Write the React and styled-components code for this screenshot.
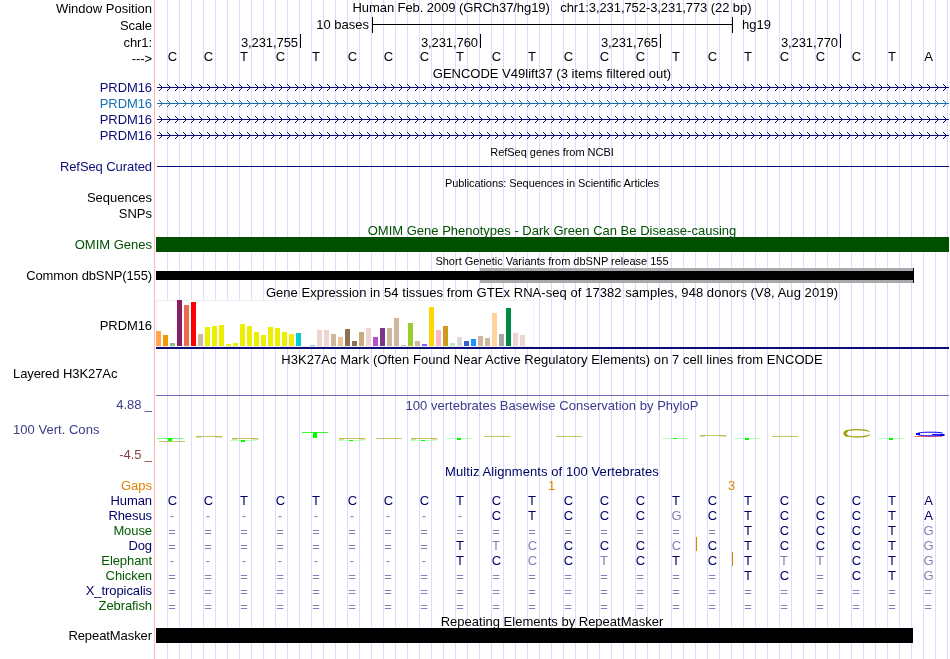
import React from "react";
import styled, {createGlobalStyle} from "styled-components";

const NAVY = "#0c0c78";
const BLUE = "#1670b0";
const GREEN = "#005000";
const SPECIES_GREEN = "#005a00";
const ALIGN = "#000064";
const ORANGE = "#e08200";

const HUMAN = "CCTCTCCCTCTCCCTCTCCCTA";

const genes = [
    {name: "PRDM16", color: NAVY},
    {name: "PRDM16", color: BLUE},
    {name: "PRDM16", color: NAVY},
    {name: "PRDM16", color: NAVY},
];

// lower case = base differs from human
const species = [
    {name: "Human", color: ALIGN, seq: HUMAN},
    {name: "Rhesus", color: ALIGN, seq: "---------CTCCCgCTCCCTA"},
    {name: "Mouse", color: SPECIES_GREEN, seq: "================TCCCTg"},
    {name: "Dog", color: ALIGN, seq: "========TtcCCCcCTCCCTg", insert: 541},
    {name: "Elephant", color: SPECIES_GREEN, seq: "--------TCcCtCTCTttCTg", insert: 577},
    {name: "Chicken", color: SPECIES_GREEN, seq: "================TC=CTg"},
    {name: "X_tropicalis", color: ALIGN, seq: "======================"},
    {name: "Zebrafish", color: SPECIES_GREEN, seq: "======================"},
];

const tissues = [
    [15, "#ffa54f"], [11, "#ee9a00"], [3, "#8fbc8f"], [46, "#8b1c62"], [41, "#ee6a50"], [44, "#ff0000"],
    [12, "#cdb79e"], [19, "#eeee00"], [20, "#eeee00"], [21, "#eeee00"], [2, "#eeee00"], [3, "#eeee00"],
    [22, "#eeee00"], [20, "#eeee00"], [14, "#eeee00"], [11, "#eeee00"], [19, "#eeee00"], [18, "#eeee00"],
    [14, "#eeee00"], [12, "#eeee00"], [13, "#00cdcd"], [0, "#ee82ee"], [1, "#9ac0cd"], [16, "#eed5d2"],
    [16, "#eed5d2"], [12, "#cdb79e"], [9, "#eec591"], [17, "#8b7355"], [5, "#8b7355"], [14, "#cdaa7d"],
    [18, "#eed5d2"], [9, "#b452cd"], [18, "#7a378b"], [18, "#cdb79e"], [28, "#cdb79e"], [1, "#cdb79e"],
    [23, "#9acd32"], [5, "#cdb79e"], [2, "#7a67ee"], [39, "#ffd700"], [16, "#ffb6c1"], [20, "#cd9b1d"],
    [3, "#b4eeb4"], [9, "#d9d9d9"], [5, "#3a5fcd"], [7, "#1e90ff"], [10, "#cdb79e"], [8, "#cdb79e"],
    [33, "#ffd39b"], [12, "#a6a6a6"], [38, "#008b45"], [13, "#eed5d2"], [11, "#eed5d2"], [0, "#ff00ff"],
];

// x, y and size are in pixels of the track
const logo = [
    {base: "T", x: 2, y: 40, h: 3},
    {base: "c", x: 4, y: 43, h: 1},
    {base: "c", x: 41, y: 38, h: 2},
    {base: "c", x: 77, y: 40, h: 2},
    {base: "t", x: 75, y: 42, h: 2},
    {base: "T", x: 147, y: 34, h: 6, strong: true},
    {base: "c", x: 184, y: 40, h: 2},
    {base: "t", x: 183, y: 42, h: 1},
    {base: "c", x: 221, y: 40, h: 1},
    {base: "c", x: 256, y: 40, h: 2},
    {base: "t", x: 255, y: 42, h: 1},
    {base: "t", x: 291, y: 40, h: 2},
    {base: "c", x: 329, y: 38, h: 1},
    {base: "c", x: 401, y: 38, h: 1},
    {base: "t", x: 507, y: 40, h: 1},
    {base: "c", x: 545, y: 37, h: 2},
    {base: "t", x: 579, y: 40, h: 2},
    {base: "c", x: 617, y: 38, h: 1},
    {base: "t", x: 723, y: 40, h: 2},
];

function Arrows({color}) {
    const chevrons = [];
    for (let x = 3; x < 792; x += 8) {
        chevrons.push(`M${x + 1} 4h1v1h-1zM${x + 2} 5h1v1h-1zM${x + 3} 6h1v1h-1zM${x + 3} 8h1v1h-1zM${x + 2} 9h1v1h-1zM${x + 1} 10h1v1h-1z`);
    }
    return (
        <Drawing width="794" height="16" shapeRendering="crispEdges" fill={color}>
            <rect x="2" y="7" width="792" height="1"/>
            <path d={chevrons.join("")}/>
        </Drawing>
    );
}

function Logo() {
    return (
        <Drawing width="794" height="52">
            {logo.map((l, i) => l.base === "c" ? (
                <g key={i} fill="#a0a000">
                    <rect x={l.x} y={l.y} width="26" height="1" opacity="0.6"/>
                    {l.h > 1 && <rect x={l.x} y={l.y + 0.6} width="5" height="1" opacity="0.6"/>}
                    {l.h > 1 && <rect x={l.x + 20} y={l.y + 0.8} width="7" height="0.8" opacity="0.5"/>}
                </g>
            ) : (
                <g key={i} fill="#00ff00" shapeRendering="crispEdges">
                    <rect x={l.x} y={l.y} width="26" height="1" opacity={l.strong ? 0.8 : l.base === "T" ? 0.55 : 0.25}/>
                    <rect x={l.x + 11} y={l.y} width="4" height={l.h}/>
                </g>
            ))}
            <path fill="none" stroke="#a0a000" strokeWidth="1.1"
                  d="M714.5 33.6C712 32 707 31.6 702 31.6C694.5 31.6 689.8 33 689.8 35.2C689.8 37.5 694.5 38.9 702 38.9C707.5 38.9 712.5 38.4 714.8 36.7"/>
            <path fill="none" stroke="#a0a000" strokeWidth="2.6"
                  d="M692.5 32.8C690 34 689 35.2 690 36.4C690.5 37.2 691.5 37.6 692.5 38"/>
            <rect x="760" y="38" width="27" height="1" fill="#ff0000" opacity="0.6"/>
            <path fill="none" stroke="#0000ff" strokeWidth="1"
                  d="M787.5 35C785 34.3 780 34.2 775 34.2C767 34.2 762.3 34.8 762.3 35.9C762.3 37.2 767 37.8 775 37.8C780 37.8 784 37.6 787 36.9M777 36.4H788.5V38"/>
            <path fill="none" stroke="#0000ff" strokeWidth="2" d="M761 35.9H765M785 36.9H789.5"/>
        </Drawing>
    );
}

function Sequence({seq}) {
    return (
        <Bases>
            {seq.split("").map((b, i) => (
                <Base key={i} $faded={/[a-z=-]/.test(b)} $low={b === "="} $wide={/[acg]/i.test(b)}>{b.toUpperCase()}</Base>
            ))}
        </Bases>
    );
}

function App() {
    return (
        <Page>
            <GlobalStyle/>
            <Row $h={17}>
                <Label $top={1} $spacing={0}>Window Position</Label>
                <Title $spacing={-0.08}>Human Feb. 2009 (GRCh37/hg19)&nbsp;&nbsp; chr1:3,231,752-3,231,773 (22 bp)</Title>
            </Row>
            <Row $h={17}>
                <Label $top={1}>Scale</Label>
                <Scale>
                    <ScaleText $right>10 bases</ScaleText>
                    <ScaleBar><Line $color="#000" $top={7}/></ScaleBar>
                    <ScaleText>hg19</ScaleText>
                </Scale>
            </Row>
            <Row $h={15}>
                <Label $top={1}>chr1:</Label>
                <Ruler>
                    {["3,231,755", "3,231,760", "3,231,765", "3,231,770"].map((n) => <Tick key={n}>{n}</Tick>)}
                </Ruler>
            </Row>
            <Row $h={17}>
                <Label $top={2}>---&gt;</Label>
                <Black><Sequence seq={HUMAN}/></Black>
            </Row>
            <Row $h={14}>
                <Label/>
                <Title>GENCODE V49lift37 (3 items filtered out)</Title>
            </Row>
            {genes.map((g, i) => (
                <Row key={i} $h={16}>
                    <Label $color={g.color}>{g.name}</Label>
                    <Arrows color={g.color}/>
                </Row>
            ))}
            <Row $h={15}>
                <Label/>
                <Title $small $top={1} $spacing={-0.03}>RefSeq genes from NCBI</Title>
            </Row>
            <Row $h={15}>
                <Label $color={NAVY}>RefSeq Curated</Label>
                <Track><Line $color={NAVY} $top={7} $left={2}/></Track>
            </Row>
            <Row $h={16}>
                <Label/>
                <Title $small $top={2} $spacing={-0.08}>Publications: Sequences in Scientific Articles</Title>
            </Row>
            <Row $h={16}><Label $spacing={0}>Sequences</Label></Row>
            <Row $h={17}><Label $spacing={0}>SNPs</Label></Row>
            <Row $h={14}>
                <Label/>
                <Title $color={GREEN}>OMIM Gene Phenotypes - Dark Green Can Be Disease-causing</Title>
            </Row>
            <Row $h={15}>
                <Label $color={GREEN} $spacing={0}>OMIM Genes</Label>
                <Bar $color={GREEN} $w={793}/>
            </Row>
            <Row $h={16}>
                <Label/>
                <Title $small $top={2}>Short Genetic Variants from dbSNP release 155</Title>
            </Row>
            <Row $h={15}>
                <Label $spacing={-0.12}>Common dbSNP(155)</Label>
                <Snp>
                    <SnpRange/>
                    <SnpRange $wide/>
                </Snp>
            </Row>
            <Row $h={17}>
                <Label/>
                <Title $top={2} $spacing={0.055}>Gene Expression in 54 tissues from GTEx RNA-seq of 17382 samples, 948 donors (V8, Aug 2019)</Title>
            </Row>
            <Row $h={49}>
                <Label $top={18}>PRDM16</Label>
                <Expression>
                    <Chart>
                        {tissues.map(([h, color], i) => <Tissue key={i} style={{height: h, background: color}}/>)}
                    </Chart>
                </Expression>
            </Row>
            <Row $h={17}>
                <Label/>
                <Title $top={3} $spacing={0.045}>H3K27Ac Mark (Often Found Near Active Regulatory Elements) on 7 cell lines from ENCODE</Title>
            </Row>
            <Row $h={31}>
                <Label $start>Layered H3K27Ac</Label>
                <Track><Line $color="#6e6eb4" $top={29} $left={1}/></Track>
            </Row>
            <Row $h={67}>
                <Limits>
                    <Label $color="#3c3c8c">4.88 _</Label>
                    <Label $color="#3c3c8c" $start $spacing={0.03}>100 Vert. Cons</Label>
                    <Label $color="#8c3c3c">-4.5 _</Label>
                </Limits>
                <Track>
                    <Title $top={1} $color="#3c3c8c" $spacing={0.02}>100 vertebrates Basewise Conservation by PhyloP</Title>
                    <LogoBox><Logo/></LogoBox>
                </Track>
            </Row>
            <Row $h={14}>
                <Label/>
                <Title $color={ALIGN} $spacing={0.08}>Multiz Alignments of 100 Vertebrates</Title>
            </Row>
            <Row $h={15}>
                <Label $color={ORANGE} $spacing={0}>Gaps</Label>
                <Track>
                    <Gap $x={393}>1</Gap>
                    <Gap $x={573}>3</Gap>
                </Track>
            </Row>
            {species.map((s) => (
                <Row key={s.name} $h={15}>
                    <Label $color={s.color}>{s.name}</Label>
                    <Track>
                        <Sequence seq={s.seq}/>
                        {s.insert && <Insert $x={s.insert}/>}
                    </Track>
                </Row>
            ))}
            <Row $h={15}>
                <Label/>
                <Title $top={1}>Repeating Elements by RepeatMasker</Title>
            </Row>
            <Row $h={15}>
                <Label>RepeatMasker</Label>
                <Bar $color="#000" $w={757}/>
            </Row>
        </Page>
    );
}

export default App;


const GlobalStyle = createGlobalStyle`
  body {
    margin: 0;
    background: #fff;
    overflow: hidden;
  }
`;

const Page = styled.div`
  width: 949px;
  height: 659px;
  font-family: "Liberation Sans", Arial, sans-serif;
  font-size: 13px;
  line-height: 15px;
  color: #000;
  white-space: nowrap;
  will-change: transform;
  background: linear-gradient(#ffb4b4, #ffb4b4) 154px 0 / 1px 100% no-repeat,
  repeating-linear-gradient(to right, #dcdcff 0 1px, transparent 1px 12px) 167px 0 / 782px 100% no-repeat;
`;

const Row = styled.div`
  display: grid;
  grid-template-columns: 152px 794px;
  column-gap: 3px;
  height: ${(p) => p.$h}px;
`;

const Label = styled.div`
  padding-top: ${(p) => p.$top || 0}px;
  padding-left: ${(p) => (p.$start ? 13 : 0)}px;
  text-align: ${(p) => (p.$start ? "left" : "right")};
  letter-spacing: ${(p) => p.$spacing ?? -0.08}px;
  color: ${(p) => p.$color || "#000"};
`;

const Limits = styled.div`
  display: flex;
  flex-direction: column;
  gap: 10px;
`;

const Title = styled.div`
  padding-top: ${(p) => p.$top || 0}px;
  text-align: center;
  font-size: ${(p) => (p.$small ? 11 : 13)}px;
  line-height: ${(p) => (p.$small ? 14 : 15)}px;
  letter-spacing: ${(p) => p.$spacing || 0}px;
  color: ${(p) => p.$color || "#000"};
`;

const Track = styled.div`
  position: relative;
  min-width: 0;
`;

const Drawing = styled.svg`
  display: block;
`;

const LogoBox = styled.div`
  margin-top: -15px;
`;

const Line = styled.div`
  height: 1px;
  margin-left: ${(p) => p.$left || 0}px;
  transform: translateY(${(p) => p.$top}px);
  background: ${(p) => p.$color};
`;

const Scale = styled.div`
  display: grid;
  grid-template-columns: 217px 361px 1fr;
`;

const ScaleText = styled.div`
  padding: ${(p) => (p.$right ? "0 3px 0 0" : "0 0 0 9px")};
  text-align: ${(p) => (p.$right ? "right" : "left")};
`;

const ScaleBar = styled.div`
  height: 16px;
  box-sizing: border-box;
  border: solid #000;
  border-width: 0 1px;
`;

const Ruler = styled.div`
  display: grid;
  grid-template-columns: 146px repeat(3, 180px);
`;

const Tick = styled.div`
  height: 14px;
  padding: 1px 2px 0 0;
  box-sizing: border-box;
  text-align: right;
  letter-spacing: -0.08px;
  border-right: 1px solid #000;
`;

const Bases = styled.div`
  display: grid;
  grid-template-columns: repeat(22, 36px);
  margin-left: -1px;
  text-align: center;
`;

const Base = styled.span`
  color: ${(p) => (p.$faded ? "#8282b4" : ALIGN)};
  padding-top: ${(p) => (p.$low ? 1 : 0)}px;
  padding-left: ${(p) => (p.$wide ? 1 : 0)}px;
`;

const Black = styled.div`
  ${Base} {
    color: #000;
  }
`;

const Bar = styled.div`
  width: ${(p) => p.$w}px;
  margin-left: 1px;
  background: ${(p) => p.$color};
`;

const Snp = styled.div`
  display: grid;
  margin-left: 1px;
  width: 758px;
`;

const SnpRange = styled.div`
  grid-area: 1 / 1;
  height: ${(p) => (p.$wide ? 9 : 15)}px;
  margin-top: ${(p) => (p.$wide ? 3 : 0)}px;
  margin-left: ${(p) => (p.$wide ? 0 : 324)}px;
  background: ${(p) => (p.$wide ? "#000" : "#a9a9a9")};
  box-sizing: border-box;
  border-right: 1px solid #000;
`;

const Expression = styled.div`
  margin-left: 1px;
  height: 47px;
  border-bottom: 2px solid ${NAVY};
`;

const Chart = styled.div`
  display: flex;
  align-items: flex-end;
  gap: 2px;
  width: 378px;
  height: 47px;
  padding-bottom: 1px;
  box-sizing: border-box;
  background: #fff;
  box-shadow: inset 0 0 0 1px #f0f0f0;
`;

const Tissue = styled.div`
  width: 5px;
`;

const Gap = styled.span`
  position: absolute;
  left: ${(p) => p.$x}px;
  top: 0;
  color: ${ORANGE};
`;

const Insert = styled.span`
  position: absolute;
  left: ${(p) => p.$x}px;
  top: -1px;
  width: 1px;
  height: 14px;
  background: ${ORANGE};
`;
